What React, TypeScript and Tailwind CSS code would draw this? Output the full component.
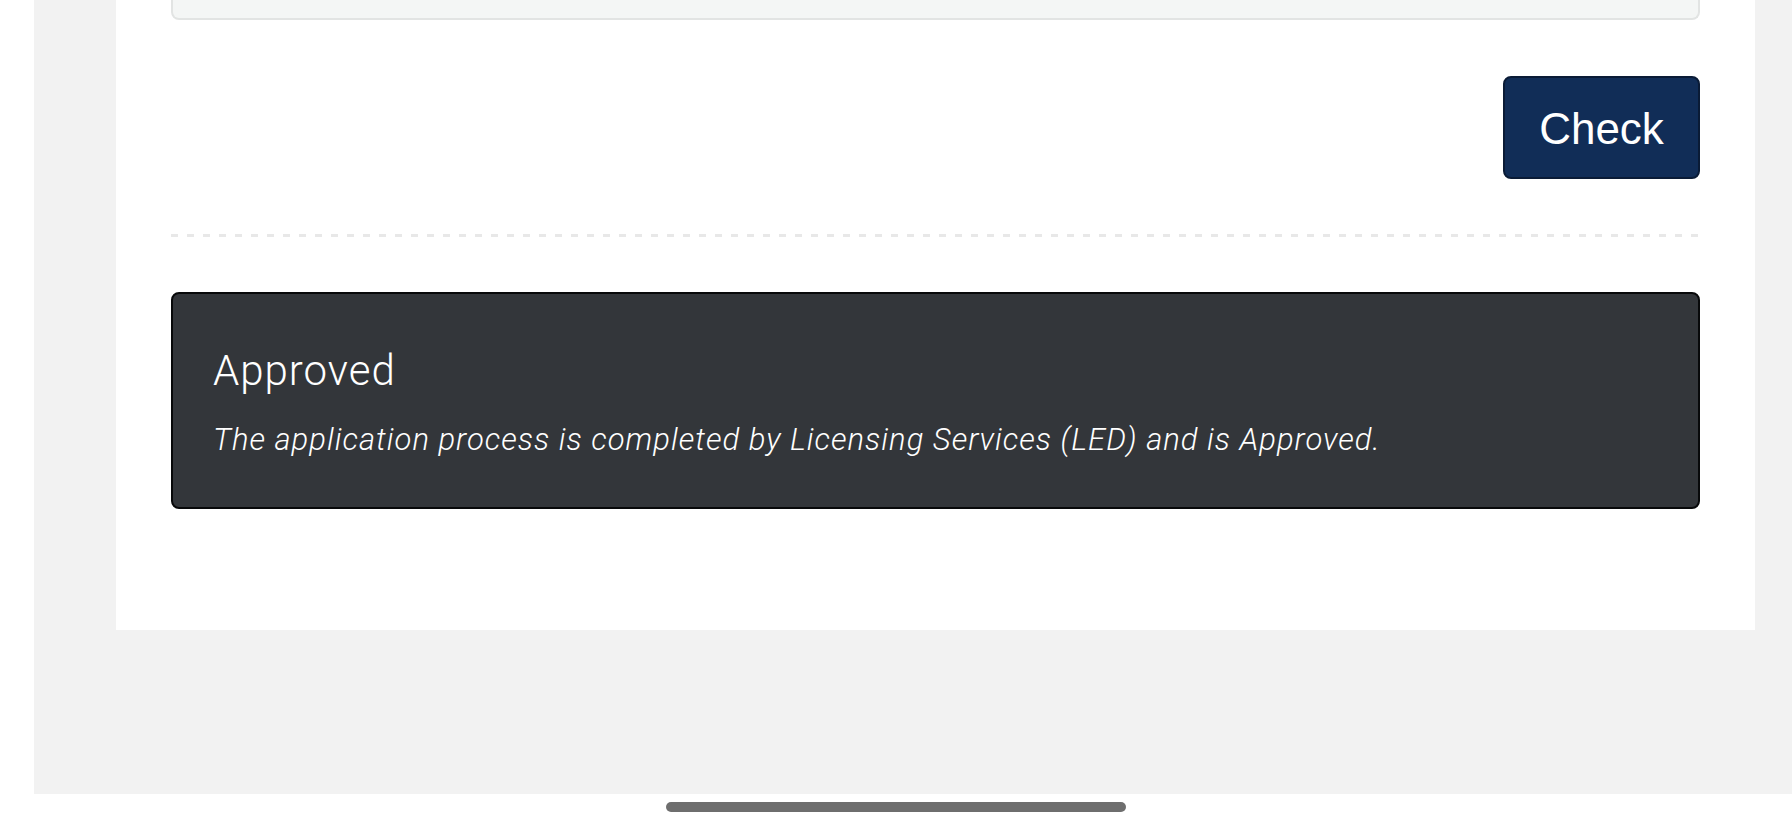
import React from "react"

export default function App() {
  return (
    <div className="min-h-screen bg-white font-['Liberation_Sans',Arial,sans-serif]">
      <div className="ml-[34px] h-[794px] bg-[#f2f2f2]">
        <div className="ml-[82px] flex h-[630px] w-[1639px] flex-col bg-white px-[55px]">
          {/* tail of the form box above */}
          <div className="h-[20px] rounded-b-lg border-x-2 border-b-2 border-[#e2e4e3] bg-[#f4f6f5]" />

          <div className="mt-[56px] flex justify-end">
            <button className="flex h-[103px] w-[197px] items-center justify-center rounded-lg border-2 border-[#0a1b36] bg-[#112d57] pt-[2px] text-[44px] text-white">
              Check
            </button>
          </div>

          <div className="mt-[55px] h-[3px] bg-[linear-gradient(to_right,#e8e8e8_7px,transparent_7px)] bg-[length:16px_3px]" />

          <div className="mt-[55px] h-[217px] rounded-lg border-2 border-[#08090a] bg-[#33363a] px-10 pt-[52px] font-['Roboto',sans-serif] font-light text-white">
            <h3 className="text-[42px] leading-[50px] tracking-[1px]">Approved</h3>
            <p className="mt-[25px] text-[31px] italic leading-[37px] tracking-[1px]">
              The application process is completed by Licensing Services (LED) and is Approved.
            </p>
          </div>
        </div>
      </div>
      <div className="flex justify-center pt-[8px]">
        <div className="h-[10px] w-[460px] rounded-full bg-[#6e6e6e]" />
      </div>
    </div>
  )
}
